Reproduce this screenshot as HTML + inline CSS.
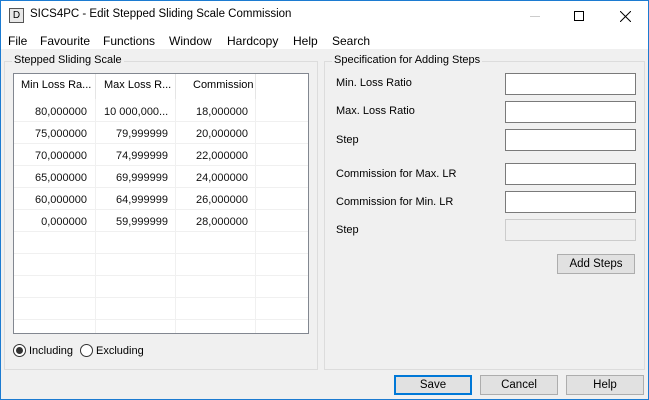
<!DOCTYPE html>
<html><head><meta charset="utf-8"><style>
*{box-sizing:border-box;margin:0;padding:0}
body{width:649px;height:400px;overflow:hidden;font-family:"Liberation Sans",sans-serif;font-size:11px;color:#000;background:#f0f0f0;position:relative}
.a{position:absolute;white-space:nowrap}
.win{position:absolute;left:0;top:0;width:649px;height:400px;border:1px solid #1c7bd1;border-top:none}
.title{position:absolute;left:0;top:0;width:649px;height:31px;background:#fff;border-top:1px solid #1c7bd1;border-left:1px solid #1c7bd1;border-right:1px solid #1c7bd1}
.menu{position:absolute;left:1px;top:31px;width:647px;height:18px;background:#fff;font-size:12px;line-height:17px}
.grp{position:absolute;border:1px solid #dcdcdc}
.lbl{position:absolute;background:#f0f0f0;padding:0 2px;top:-8px;left:7px}
.tb{position:absolute;left:505px;width:131px;height:22px;background:#fff;border:1px solid #7a7a7a}
.btn{position:absolute;height:20px;background:#e1e1e1;border:1px solid #adadad;text-align:center;line-height:18px;font-size:11.5px}
.lv{position:absolute;left:13px;top:73px;width:296px;height:261px;background:#fff;border:1px solid #828790;overflow:hidden}
.col{text-align:right;padding-right:7px;line-height:22px;color:#111}
</style></head><body>
<div class="title">
 <div class="a" style="left:8px;top:7px;width:15px;height:15px;border:1px solid #555;background:#e8e8e8;font-size:10px;text-align:center;line-height:13px">D</div>
 <div class="a" style="left:29px;top:7px;font-size:11.5px">SICS4PC - Edit Stepped Sliding Scale Commission</div>
 <div class="a" style="left:529px;top:15px;width:10px;height:1px;background:#ccc"></div>
 <div class="a" style="left:573px;top:10px;width:10px;height:10px;border:1px solid #000"></div>
 <svg class="a" style="left:619px;top:10px" width="11" height="11"><path d="M0 0L11 11M11 0L0 11" stroke="#000" stroke-width="1"/></svg>
</div>
<div class="menu">
 <span class="a" style="left:7px;top:2px">File</span>
 <span class="a" style="left:39px;top:2px">Favourite</span>
 <span class="a" style="left:102px;top:2px">Functions</span>
 <span class="a" style="left:168px;top:2px">Window</span>
 <span class="a" style="left:226px;top:2px">Hardcopy</span>
 <span class="a" style="left:292px;top:2px">Help</span>
 <span class="a" style="left:331px;top:2px">Search</span>
</div>
<div class="win"></div>

<div class="grp" style="left:4px;top:61px;width:314px;height:309px"><span class="lbl">Stepped Sliding Scale</span></div>
<div class="lv">
 <div class="a" style="left:81px;top:0;width:1px;height:260px;background:#f0f0f0"></div>
 <div class="a" style="left:161px;top:0;width:1px;height:260px;background:#f0f0f0"></div>
 <div class="a" style="left:241px;top:0;width:1px;height:260px;background:#f0f0f0"></div>
 <div class="a" style="left:0;top:47px;width:294px;height:1px;background:#f0f0f0"></div>
 <div class="a" style="left:0;top:69px;width:294px;height:1px;background:#f0f0f0"></div>
 <div class="a" style="left:0;top:91px;width:294px;height:1px;background:#f0f0f0"></div>
 <div class="a" style="left:0;top:113px;width:294px;height:1px;background:#f0f0f0"></div>
 <div class="a" style="left:0;top:135px;width:294px;height:1px;background:#f0f0f0"></div>
 <div class="a" style="left:0;top:157px;width:294px;height:1px;background:#f0f0f0"></div>
 <div class="a" style="left:0;top:179px;width:294px;height:1px;background:#f0f0f0"></div>
 <div class="a" style="left:0;top:201px;width:294px;height:1px;background:#f0f0f0"></div>
 <div class="a" style="left:0;top:223px;width:294px;height:1px;background:#f0f0f0"></div>
 <div class="a" style="left:0;top:245px;width:294px;height:1px;background:#f0f0f0"></div>
 <div class="a" style="left:0;top:0;width:242px;height:25px;background:#fff"></div>
 <div class="a" style="left:81px;top:0;width:1px;height:25px;background:#e5e5e5"></div>
 <div class="a" style="left:161px;top:0;width:1px;height:25px;background:#e5e5e5"></div>
 <div class="a" style="left:241px;top:0;width:1px;height:25px;background:#e5e5e5"></div>
 <span class="a" style="left:7px;top:5px">Min Loss Ra...</span>
 <span class="a" style="left:90px;top:5px">Max Loss R...</span>
 <span class="a" style="left:179px;top:5px">Commission</span>
</div>
<div class="a" style="left:14px;top:101px;width:80px"><div class="col">80,000000<br>75,000000<br>70,000000<br>65,000000<br>60,000000<br>0,000000</div></div>
<div class="a" style="left:95px;top:101px;width:80px"><div class="col"><span style="float:left;padding-left:9px">10 000,000...</span><br>79,999999<br>74,999999<br>69,999999<br>64,999999<br>59,999999</div></div>
<div class="a" style="left:175px;top:101px;width:80px"><div class="col">18,000000<br>20,000000<br>22,000000<br>24,000000<br>26,000000<br>28,000000</div></div>

<div class="a" style="left:13px;top:344px;width:13px;height:13px;border:1px solid #333;border-radius:50%;background:#fff"><div style="position:absolute;left:2px;top:2px;width:7px;height:7px;border-radius:50%;background:#333"></div></div>
<span class="a" style="left:29px;top:345px">Including</span>
<div class="a" style="left:80px;top:344px;width:13px;height:13px;border:1px solid #333;border-radius:50%;background:#fff"></div>
<span class="a" style="left:96px;top:345px">Excluding</span>

<div class="grp" style="left:324px;top:61px;width:321px;height:309px"><span class="lbl">Specification for Adding Steps</span></div>
<span class="a" style="left:336px;top:77px">Min. Loss Ratio</span>
<span class="a" style="left:336px;top:105px">Max. Loss Ratio</span>
<span class="a" style="left:336px;top:134px">Step</span>
<span class="a" style="left:336px;top:168px">Commission for Max. LR</span>
<span class="a" style="left:336px;top:196px">Commission for Min. LR</span>
<span class="a" style="left:336px;top:224px">Step</span>
<div class="tb" style="top:73px"></div>
<div class="tb" style="top:101px"></div>
<div class="tb" style="top:129px"></div>
<div class="tb" style="top:163px"></div>
<div class="tb" style="top:191px"></div>
<div class="tb" style="top:219px;background:#f0f0f0;border-color:#ccc"></div>
<div class="btn" style="left:557px;top:254px;width:78px">Add Steps</div>

<div class="btn" style="left:394px;top:375px;width:78px;border:2px solid #0078d7;line-height:16px">Save</div>
<div class="btn" style="left:480px;top:375px;width:78px">Cancel</div>
<div class="btn" style="left:566px;top:375px;width:78px">Help</div>
</body></html>
